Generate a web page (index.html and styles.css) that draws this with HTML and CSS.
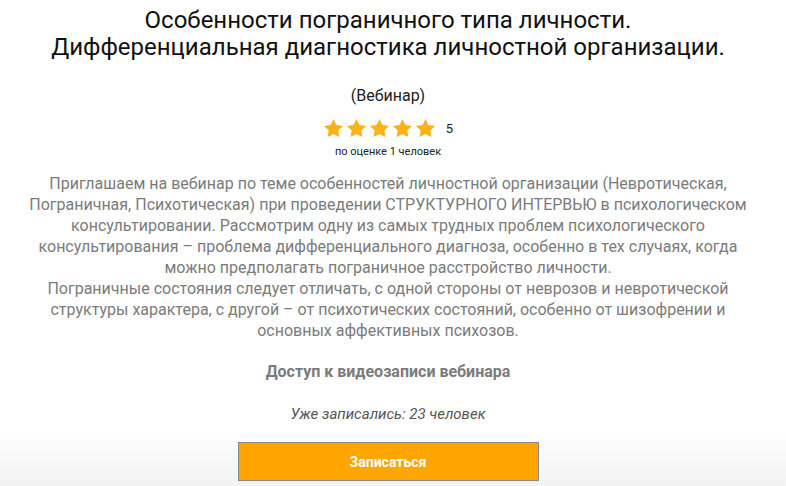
FILE: index.html
```html
<!DOCTYPE html>
<html lang="ru">
<head>
    <meta charset="UTF-8">
    <meta name="viewport" content="width=device-width, initial-scale=1.0">
    <title>Вебинар</title>
    <link rel="stylesheet" href="styles.css">
</head>
<body>
    <div class="webinar">
        <h1 class="webinar-title">Особенности пограничного типа личности.<br>Дифференциальная диагностика личностной организации.</h1>
        <div class="webinar-type">(Вебинар)</div>
        <div class="rating">
            <div class="rating-stars">
                <svg class="star" viewBox="1 1 22 22"><polygon points="12,2 15.09,8.26 22,9.27 17,14.14 18.18,21.02 12,17.77 5.82,21.02 7,14.14 2,9.27 8.91,8.26"/></svg>
                <svg class="star" viewBox="1 1 22 22"><polygon points="12,2 15.09,8.26 22,9.27 17,14.14 18.18,21.02 12,17.77 5.82,21.02 7,14.14 2,9.27 8.91,8.26"/></svg>
                <svg class="star" viewBox="1 1 22 22"><polygon points="12,2 15.09,8.26 22,9.27 17,14.14 18.18,21.02 12,17.77 5.82,21.02 7,14.14 2,9.27 8.91,8.26"/></svg>
                <svg class="star" viewBox="1 1 22 22"><polygon points="12,2 15.09,8.26 22,9.27 17,14.14 18.18,21.02 12,17.77 5.82,21.02 7,14.14 2,9.27 8.91,8.26"/></svg>
                <svg class="star" viewBox="1 1 22 22"><polygon points="12,2 15.09,8.26 22,9.27 17,14.14 18.18,21.02 12,17.77 5.82,21.02 7,14.14 2,9.27 8.91,8.26"/></svg>
                <span class="rating-value">5</span>
            </div>
            <div class="rating-count">по оценке 1 человек</div>
        </div>
        <p class="webinar-desc">Приглашаем на вебинар по теме особенностей личностной организации (Невротическая, Пограничная, Психотическая) при проведении СТРУКТУРНОГО ИНТЕРВЬЮ в психологическом консультировании. Рассмотрим одну из самых трудных проблем психологического консультирования – проблема дифференциального диагноза, особенно в тех случаях, когда можно предполагать пограничное расстройство личности.<br>Пограничные состояния следует отличать, с одной стороны от неврозов и невротической структуры характера, с другой – от психотических состояний, особенно от шизофрении и основных аффективных психозов.</p>
        <div class="access">Доступ к видеозаписи вебинара</div>
        <div class="signed">Уже записались: 23 человек</div>
        <button class="signup-btn">Записаться</button>
    </div>
</body>
</html>
```

FILE: styles.css
```css
body {
    margin: 0;
    min-height: 100vh;
    font-family: Roboto, "Liberation Sans", sans-serif;
    background: linear-gradient(to bottom, #fff 0, #fff 430px, #f2f2f2 486px);
}

.webinar {
    width: 776px;
    display: flex;
    flex-direction: column;
    align-items: center;
    text-align: center;
}

.webinar-title {
    margin: 7px 0 0;
    font-size: 24px;
    font-weight: 400;
    line-height: 27px;
    color: #111;
}

.webinar-type {
    margin-top: 25px;
    font-size: 16px;
    line-height: 20px;
    color: #222;
}

.rating {
    margin-top: 12px;
    display: flex;
    flex-direction: column;
    align-items: center;
}

.rating-stars {
    display: flex;
    align-items: center;
    gap: 2px;
}

.star {
    width: 21px;
    height: 21px;
    fill: #fcb116;
}

.rating-value {
    margin-left: 8px;
    font-size: 13px;
    color: #222;
}

.rating-count {
    margin-top: 6px;
    font-size: 11px;
    color: #222;
}

.webinar-desc {
    width: 730px;
    margin: 15px 0 0;
    font-size: 16px;
    line-height: 21px;
    color: #7b7b7b;
}

.access {
    margin-top: 21px;
    font-size: 16px;
    font-weight: 700;
    color: #7b7b7b;
}

.signed {
    margin-top: 24px;
    font-size: 15px;
    font-style: italic;
    color: #555;
}

.signup-btn {
    margin-top: 19px;
    width: 301px;
    height: 39px;
    background-color: #ffa500;
    border: 1px solid #8a8a8a;
    color: #fff;
    font-family: Roboto, "Liberation Sans", sans-serif;
    font-size: 14px;
    font-weight: 700;
    cursor: pointer;
}
```
